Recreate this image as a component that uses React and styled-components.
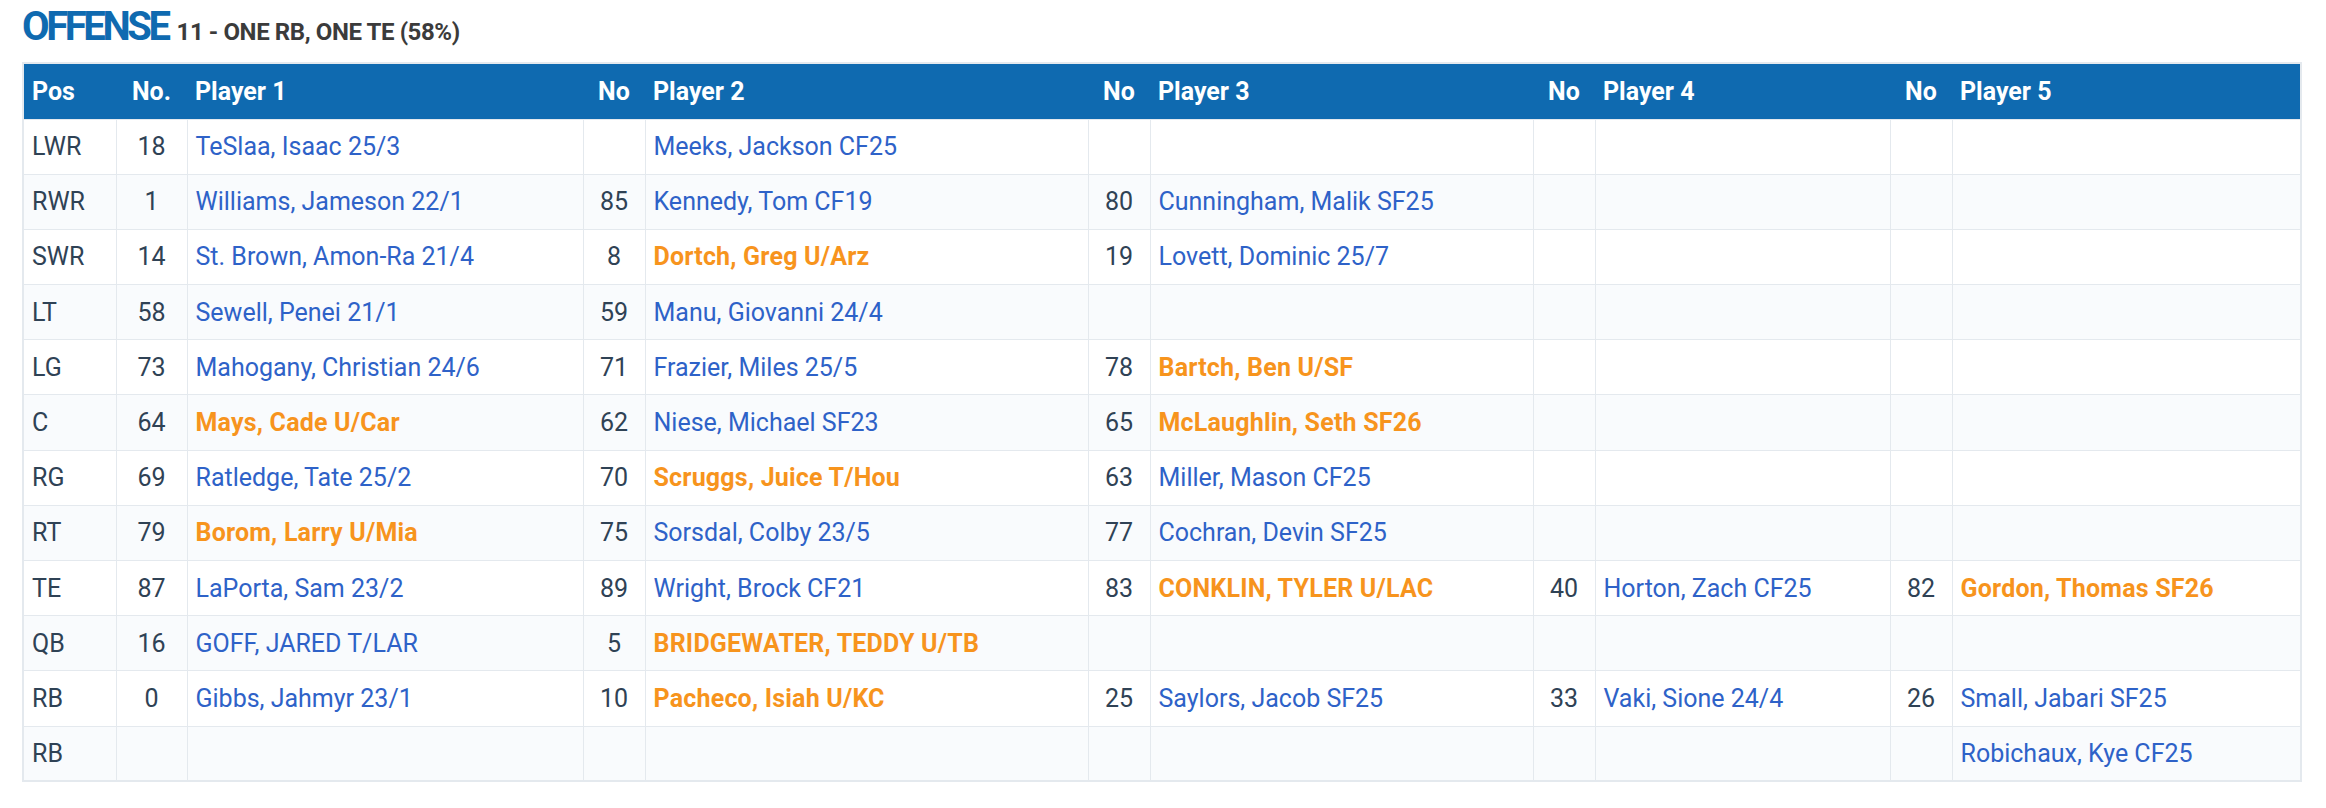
import React from "react";
import styled, { createGlobalStyle } from "styled-components";

const GlobalStyle = createGlobalStyle`
  body {
    margin: 0;
    background: #ffffff;
    font-family: Roboto, "Noto Sans", Arial, sans-serif;
  }
`;

const DepthChartStyles = styled.div`
  padding: 0 26px 0 22px;
  width: 2278px;
`;

const TitleRow = styled.div`
  display: flex;
  align-items: baseline;
  gap: 9px;
  height: 62px;
  padding-top: 1px;
  box-sizing: border-box;
  white-space: nowrap;
`;

const Title = styled.h2`
  margin: 0;
  font-size: 40px;
  font-weight: 700;
  letter-spacing: -3.4px;
  color: #0f6ab0;
  line-height: 52px;
`;

const SubTitle = styled.span`
  font-size: 24px;
  font-weight: 700;
  letter-spacing: -0.4px;
  color: #3b3b3b;
`;

const Table = styled.table`
  width: 2278px;
  table-layout: fixed;
  border-collapse: collapse;
  border: 2px solid #e4e9ee;
  font-size: 25px;
  color: #2f4255;
`;

const HeadRow = styled.tr`
  height: 56px;
  background: #0f6ab0;
`;

const HeadCell = styled.th`
  padding: 0 8px;
  text-align: ${(props) => (props.$num ? "center" : "left")};
  font-weight: 700;
  color: #ffffff;
  white-space: nowrap;
`;

const BodyRow = styled.tr`
  height: 55.2px;
  background: ${(props) => (props.$alt ? "#f9fbfd" : "#ffffff")};
`;

const Cell = styled.td`
  padding: 0 8px;
  border: 1.5px solid #e4e9ee;
  text-align: ${(props) => (props.$num ? "center" : "left")};
  vertical-align: middle;
  white-space: nowrap;
`;

const PlayerLink = styled.a`
  color: ${(props) => (props.$flag ? "#f7941d" : "#2e62c8")};
  font-weight: ${(props) => (props.$flag ? 700 : 400)};
  letter-spacing: ${(props) => (props.$flag ? "0.2px" : "0")};
  text-decoration: none;
`;

const widths = [93, 71, 396, 62, 443, 62, 383, 62, 295, 62, 349];

const columns = [
  { label: "Pos" },
  { label: "No.", num: true },
  { label: "Player 1" },
  { label: "No", num: true },
  { label: "Player 2" },
  { label: "No", num: true },
  { label: "Player 3" },
  { label: "No", num: true },
  { label: "Player 4" },
  { label: "No", num: true },
  { label: "Player 5" },
];

// each slot: [number, name, flagged]
const rows = [
  { pos: "LWR", slots: [["18", "TeSlaa, Isaac 25/3"], ["", "Meeks, Jackson CF25"]] },
  {
    pos: "RWR",
    slots: [["1", "Williams, Jameson 22/1"], ["85", "Kennedy, Tom CF19"], ["80", "Cunningham, Malik SF25"]],
  },
  {
    pos: "SWR",
    slots: [["14", "St. Brown, Amon-Ra 21/4"], ["8", "Dortch, Greg U/Arz", true], ["19", "Lovett, Dominic 25/7"]],
  },
  { pos: "LT", slots: [["58", "Sewell, Penei 21/1"], ["59", "Manu, Giovanni 24/4"]] },
  {
    pos: "LG",
    slots: [["73", "Mahogany, Christian 24/6"], ["71", "Frazier, Miles 25/5"], ["78", "Bartch, Ben U/SF", true]],
  },
  {
    pos: "C",
    slots: [["64", "Mays, Cade U/Car", true], ["62", "Niese, Michael SF23"], ["65", "McLaughlin, Seth SF26", true]],
  },
  {
    pos: "RG",
    slots: [["69", "Ratledge, Tate 25/2"], ["70", "Scruggs, Juice T/Hou", true], ["63", "Miller, Mason CF25"]],
  },
  {
    pos: "RT",
    slots: [["79", "Borom, Larry U/Mia", true], ["75", "Sorsdal, Colby 23/5"], ["77", "Cochran, Devin SF25"]],
  },
  {
    pos: "TE",
    slots: [
      ["87", "LaPorta, Sam 23/2"],
      ["89", "Wright, Brock CF21"],
      ["83", "CONKLIN, TYLER U/LAC", true],
      ["40", "Horton, Zach CF25"],
      ["82", "Gordon, Thomas SF26", true],
    ],
  },
  { pos: "QB", slots: [["16", "GOFF, JARED T/LAR"], ["5", "BRIDGEWATER, TEDDY U/TB", true]] },
  {
    pos: "RB",
    slots: [
      ["0", "Gibbs, Jahmyr 23/1"],
      ["10", "Pacheco, Isiah U/KC", true],
      ["25", "Saylors, Jacob SF25"],
      ["33", "Vaki, Sione 24/4"],
      ["26", "Small, Jabari SF25"],
    ],
  },
  { pos: "RB", slots: [[], [], [], [], ["", "Robichaux, Kye CF25"]] },
];

const App = () => {
  return (
    <DepthChartStyles>
      <GlobalStyle />
      <TitleRow>
        <Title>OFFENSE</Title>
        <SubTitle>11 - ONE RB, ONE TE (58%)</SubTitle>
      </TitleRow>
      <Table>
        <colgroup>
          {widths.map((w, i) => (
            <col key={i} style={{ width: w }} />
          ))}
        </colgroup>
        <thead>
          <HeadRow>
            {columns.map((c, i) => (
              <HeadCell key={i} $num={c.num}>
                {c.label}
              </HeadCell>
            ))}
          </HeadRow>
        </thead>
        <tbody>
          {rows.map((row, r) => {
            const slots = [0, 1, 2, 3, 4].map((i) => row.slots[i] || []);
            return (
              <BodyRow key={r} $alt={r % 2 === 1}>
                <Cell>{row.pos}</Cell>
                {slots.map(([num, name, flag], i) => (
                  <React.Fragment key={i}>
                    <Cell $num>{num}</Cell>
                    <Cell>
                      {name && (
                        <PlayerLink href="#" $flag={flag}>
                          {name}
                        </PlayerLink>
                      )}
                    </Cell>
                  </React.Fragment>
                ))}
              </BodyRow>
            );
          })}
        </tbody>
      </Table>
    </DepthChartStyles>
  );
};

export default App;
